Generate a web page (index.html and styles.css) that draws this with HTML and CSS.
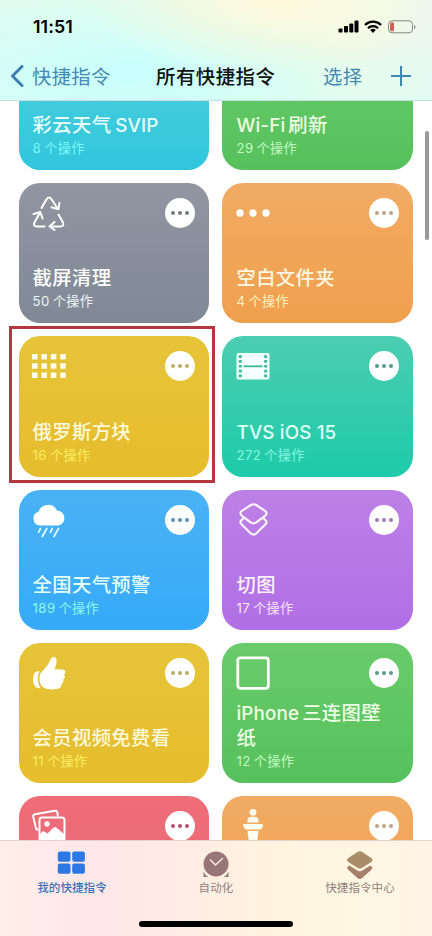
FILE: index.html
```html
<!DOCTYPE html>
<html lang="zh-CN">
<head>
<meta charset="utf-8">
<title>所有快捷指令</title>
<link rel="stylesheet" href="styles.css">
</head>
<body>
<svg class="defs" width="0" height="0">
  <symbol id="more" viewBox="0 0 30 30"><circle cx="15" cy="15" r="15" fill="#fff"/><g fill="currentColor"><circle cx="8" cy="15" r="2"/><circle cx="15" cy="15" r="2"/><circle cx="22" cy="15" r="2"/></g></symbol>
</svg>
<div class="phone">
  <header class="top">
    <div class="status">
      <span class="time">11:51</span>
      <svg class="status-icons" width="78" height="14" viewBox="0 0 78 14">
        <g fill="#000"><rect x="0.5" y="8.5" width="4" height="4" rx="1"/><rect x="6" y="6" width="4" height="6.5" rx="1"/><rect x="11.300" y="3.500" width="4" height="9" rx="1"/><rect x="16.500" y="0.500" width="4" height="12" rx="1"/></g>
        <g fill="none" stroke="#000" stroke-width="2.300"><path d="M27 5a11.300 11.300 0 0 1 16 0"/><path d="M30 8.200a7 7 0 0 1 10 0"/></g><path d="M32.200 10.100a4 4 0 0 1 5.600 0L35 12.900z" fill="#000"/>
        <rect x="50.500" y="0.800" width="24" height="12" rx="3.500" fill="none" stroke="#858a80"/><rect x="52" y="2.300" width="4" height="9" rx="1.500" fill="#d9605a"/><path d="M76 5v4q1.500-.6 1.500-2T76 5z" fill="#858a80"/>
      </svg>
    </div>
    <nav class="nav">
      <svg class="back" width="14" height="22" viewBox="0 0 14 22"><path d="M12 1.500L2.500 11 12 20.500" fill="none" stroke="#3e80b2" stroke-width="3" stroke-linecap="round" stroke-linejoin="round"/></svg>
      <span class="nav-back">快捷指令</span>
      <h1>所有快捷指令</h1>
      <span class="nav-select">选择</span>
      <svg class="plus" width="20" height="20" viewBox="0 0 20 20"><path d="M10 0v20M0 10h20" stroke="#3e88b3" stroke-width="2"/></svg>
    </nav>
  </header>
  <main class="list">
    <div class="grid">
      <section class="card cyan"><h2>彩云天气<b class="after">SVIP</b></h2><p><i>8</i>个操作</p></section>
      <section class="card green"><h2><b class="before">Wi-Fi</b>刷新</h2><p><i>29</i>个操作</p></section>

      <section class="card gray">
        <div class="row"><svg class="icon" viewBox="0 0 36 36"><g fill="none" stroke="#fff" stroke-width="2" stroke-linecap="round" stroke-linejoin="round"><path d="M10.500 13L15.500 4.300Q18 .8 20.500 4.300L27 14"/><path d="M20.500 12.200L27.500 14.200 28.500 7.700"/><path d="M27.500 19.500L32 27.500Q33.500 31.500 29 31.500H19"/><path d="M23.500 27L18.500 31.500 23.500 35"/><path d="M13.500 31.500H6Q1.500 31 3.500 27.500L9 17.500"/><path d="M2.500 19L9.300 17 11.500 23.500"/></g></svg><svg class="more"><use href="#more"/></svg></div>
        <h2>截屏清理</h2><p><i>50</i>个操作</p></section>
      <section class="card orange">
        <div class="row"><svg class="icon" viewBox="0 0 36 36"><g fill="#fff"><circle cx="5" cy="18" r="3.700"/><circle cx="18" cy="18" r="3.700"/><circle cx="31" cy="18" r="3.700"/></g></svg><svg class="more"><use href="#more"/></svg></div>
        <h2>空白文件夹</h2><p><i>4</i>个操作</p></section>

      <section class="card yellow marked">
        <div class="row"><svg class="icon" viewBox="0 0 36 36"><path d="M1 8.700h34M1 18h34M1 27.300h34" stroke="#fffceb" stroke-width="5.600" stroke-dasharray="5.600 3.800"/></svg><svg class="more"><use href="#more"/></svg></div>
        <h2>俄罗斯方块</h2><p><i>16</i>个操作</p></section>
      <section class="card teal">
        <div class="row"><svg class="icon" viewBox="0 0 36 36"><rect x="1.500" y="5" width="33" height="26.500" rx="2" fill="#f2fffc"/><path d="M8.500 18.300h19" stroke="#3bb99b" stroke-width="1.800"/><path d="M5.300 7.300v23.500M30.700 7.300v23.500" stroke="#3bb99b" stroke-width="3" stroke-dasharray="2.700 2.100"/></svg><svg class="more"><use href="#more"/></svg></div>
        <h2><b>TVS iOS 15</b></h2><p><i>272</i>个操作</p></section>

      <section class="card blue">
        <div class="row"><svg class="icon" viewBox="0 0 36 36"><path d="M9 23.500a7 7 0 0 1-1.500-13.700A10 10 0 0 1 26 8.500a7.600 7.600 0 0 1 1.500 15z" fill="#fff"/><path d="M9.500 26.500l-2 3.800M15.800 26.500l-4.500 8M21.300 26.500l-2 3.800M27.500 26.500l-4.500 8" stroke="#e9ffff" stroke-width="1.700" stroke-linecap="round"/></svg><svg class="more"><use href="#more"/></svg></div>
        <h2>全国天气预警</h2><p><i>189</i>个操作</p></section>
      <section class="card purple">
        <div class="row"><svg class="icon" viewBox="0 0 36 36"><g fill="none" stroke="#fff3ff" stroke-width="2.200" stroke-linejoin="round"><path d="M15.800 3Q18.500 1.500 21.200 3L30 8.800q3.200 2.400 0 5l-8.800 6.700q-2.700 1.500-5.400 0L7 13.800q-3.200-2.600 0-5z"/><path d="M9 16l-2 1.700q-3.200 2.600 0 5L15.800 31.500q2.700 2.200 5.400 0L30 22.700q3.200-2.400 0-5L28 16"/></g></svg><svg class="more"><use href="#more"/></svg></div>
        <h2>切图</h2><p><i>17</i>个操作</p></section>

      <section class="card yellow">
        <div class="row"><svg class="icon" viewBox="0 0 36 36"><g fill="#fff"><path d="M8.500 16.500C1 14 .5 29 5 32q2 1.500 4.500 1.200Q4.500 24 8.500 16.500z"/><path d="M20.500 3Q24 .5 25.500 4.500 26 8 23.500 14.200L32 14.500q3 .5 2.300 3 0 1.300-1.300 2 1.700 1.500.5 3.500-.3 1-1.500 1.500 1.300 2-.3 3.500-.5 1-1.500 1.200.7 2.200-1 3.500-1 1-4 1.200Q12.500 36 9.500 29 6.500 19.500 12.500 15 17 10.500 20.500 3z"/></g></svg><svg class="more"><use href="#more"/></svg></div>
        <h2>会员视频免费看</h2><p><i>11</i>个操作</p></section>
      <section class="card green">
        <div class="row"><svg class="icon" viewBox="0 0 36 36"><rect x="2.800" y="2.800" width="30.500" height="30.500" rx="2.500" fill="none" stroke="#fff" stroke-width="2.800"/></svg><svg class="more"><use href="#more"/></svg></div>
        <h2><b class="before">iPhone</b>三连图壁纸</h2><p><i>12</i>个操作</p></section>

      <section class="card red">
        <div class="row"><svg class="icon" viewBox="0 0 36 36"><g fill="none" stroke="#fff" stroke-width="2"><path d="M7.500 22L5.200 21 2.200 8.700Q2 6.500 4 6.200L24 2.800q2-.3 2.300 1.500l.6 4"/><rect x="8.500" y="9.500" width="25" height="24" rx="2.500"/></g><circle cx="16" cy="16" r="2.700" fill="#fff"/><path d="M8.500 28q2.500-6 5-4.500l3 2 5-5q2.500-3 5 0l7 6v7h-25z" fill="#fff"/></svg><svg class="more"><use href="#more"/></svg></div></section>
      <section class="card orange">
        <div class="row"><svg class="icon" viewBox="0 0 36 36"><g fill="#fffdf0"><circle cx="18" cy="4.300" r="3.400"/><path d="M12.500 14.500V12q.5-3.200 4-3.200h3q3.500 0 4 3.200v2.500z"/><path d="M8 16h20q-.5 5.500-3 5.500H11.500Q8.500 21 8 16zM12.500 23h11L22 35h-8z"/></g></svg><svg class="more"><use href="#more"/></svg></div></section>
    </div>
    <div class="scrollbar"></div>
  </main>
  <footer class="tabs">
    <div class="tab on"><svg width="30" height="30" viewBox="0 0 30 30"><g fill="#2e78e6"><rect x="0.800" y="1.500" width="12.700" height="10.300" rx="2"/><rect x="15.200" y="1.500" width="12.700" height="10.300" rx="2"/><rect x="0.800" y="13.400" width="12.700" height="10.300" rx="2"/><rect x="15.200" y="13.400" width="12.700" height="10.300" rx="2"/></g></svg><span>我的快捷指令</span></div>
    <div class="tab mid"><svg width="30" height="30" viewBox="0 0 30 30"><circle cx="15" cy="14" r="12.500" fill="#967775"/><path d="M2.500 27v-5.500q1.500 4 5 5.500zM27.500 27v-5.500q-1.500 4-5 5.500z" fill="#8a8178"/><path d="M9 9.500l5.500 5.500L22 8" fill="none" stroke="#ffe9e5" stroke-width="1.500"/></svg><span>自动化</span></div>
    <div class="tab end"><svg width="30" height="30" viewBox="0 0 30 30"><path d="M12.800 1.800q2-1.200 4 0l9.500 6.200q2.500 2 0 4l-9.500 6q-2 1.200-4 0l-9.500-6q-2.500-2 0-4z" fill="#a98d69"/><path d="M4.300 15.500l8.500 5.300q2 1 4 0l8.500-5.300q3.500 2 .8 4.500l-9.300 8.300q-2 1.500-4 0L3.500 20q-3-2.500.8-4.500z" fill="#a5806d"/></svg><span>快捷指令中心</span></div>
    <div class="home"></div>
  </footer>
</div>
</body>
</html>
```

FILE: styles.css
```css
* { box-sizing: border-box; }
body { margin: 0; font-family: Inter, "Noto Sans CJK SC", sans-serif; }
.defs { position: absolute; }
.phone { width: 432px; height: 936px; display: flex; flex-direction: column; overflow: hidden; background: #fff; }
.top {
  height: 101px; flex: none; border-bottom: 1px solid #c2e2df;
  background:
    radial-gradient(ellipse 190px 75px at 275px 0, #fff9dc, #fff9dc00),
    radial-gradient(ellipse 230px 85px at 130px 72px, #c8fffd, #c8fffd00),
    linear-gradient(#eafae000 40%, #d8fff680),
    linear-gradient(90deg, #e0fbf0, #e4fbe9 50%, #ecfbe8 80%, #ebf8f1);
}
.status { height: 51px; display: flex; align-items: center; justify-content: space-between; padding: 2px 16px 0 33px; }
.time { font-size: 17.800px; font-weight: 600; letter-spacing: .1px; }
.nav { height: 50px; display: flex; align-items: center; padding-left: 10px; color: #4588b0; font-size: 19.300px; letter-spacing: .4px; white-space: nowrap; }
.nav-back { width: 79px; margin-left: 8px; }
.nav h1 { width: 120px; margin: -2px 0 0 45px; color: #111; font-size: 19.400px; letter-spacing: .5px; font-weight: 500; }
.nav-select { width: 40px; margin-left: 47px; }
.plus { margin-left: 28px; }
.list { height: 739px; flex: none; overflow: hidden; position: relative; }
.grid { margin: -71.400px 18px 0 18.600px; display: grid; grid-template-columns: 190.900px 190.900px; grid-auto-rows: 140.500px; gap: 12.850px 13px; }
.card { border-radius: 21px; padding: 12px 14px 11.300px 14px; display: flex; flex-direction: column; justify-content: flex-end; color: #fff; position: relative; }
.row { display: flex; justify-content: space-between; align-items: center; margin: 0 .7px auto -1.600px; }
.icon { width: 36px; height: 36px; }
.more { width: 30px; height: 30px; }
.card h2 { margin: 0; font-size: 19.300px; line-height: 25px; font-weight: 500; letter-spacing: .4px; color: var(--title, #fff); }
.card b { font-weight: 500; font-size: 18.800px; letter-spacing: .15px; }
.before { margin-right: 3px; }
.after { margin-left: 4px; }
.card p { margin: 0; font-size: 13.200px; line-height: 21px; letter-spacing: .3px; color: var(--sub); }
.card i { font-style: normal; margin-right: 3px; letter-spacing: .4px; }
.cyan { background: linear-gradient(#55d0dc, #2fc6dd); --title: #e6fffa; --sub: #7cf8f5; }
.green { background: linear-gradient(#69cb69, #56c15c); --title: #efffe6; --sub: #c5f7c4; }
.gray { background: linear-gradient(#9295a2, #7f8995); --sub: #eef4f8; }
.orange { background: linear-gradient(#f1ab63, #efa04e); --title: #fff7e4; --sub: #fff0be; }
.yellow { background: linear-gradient(#e6c438, #e5bd2d); --title: #fff9dc; --sub: #fcec60; }
.teal { background: linear-gradient(#4ccdb0, #1dcbaa); --title: #e0fff5; --sub: #8af5df; }
.blue { background: linear-gradient(#49b2f4, #36aaf8); --title: #e4fff9; --sub: #8bf7ef; }
.purple { background: linear-gradient(#bd80e6, #b06fe5); --title: #fff0ff; --sub: #f8e4ff; }
.red { background: linear-gradient(#ee6d79, #e86876); }
.orange .more { color: #bea280; }
.yellow .more { color: #bdac66; }
.gray .more { color: #777b83; }
.teal .more, .green .more { color: #559a88; }
.blue .more { color: #5c91ae; }
.purple .more { color: #9d78af; }
.red .more { color: #b84f70; }
.marked::after { content: ""; position: absolute; inset: -10.500px -5.500px -6px -9.600px; border: 3px solid #b5363e; }
.scrollbar { position: absolute; right: 3px; top: 30px; width: 4px; height: 109px; border-radius: 2px; background: #999; }
.tabs {
  height: 96px; flex: none; position: relative; border-top: 1px solid #e4d3cd;
  display: grid; grid-template-columns: repeat(3, 1fr);
  background: linear-gradient(90deg, #ffeeea, #ffe7e7 22%, #ffece4 45%, #fff5df 65%, #fff6e3 88%, #fff2e6);
}
.tab { display: flex; flex-direction: column; align-items: center; padding-top: 9px; font-size: 11.500px; line-height: 16px; letter-spacing: .1px; color: #8f817c; }
.tab svg { flex: none; }
.tab.on { color: #3c73b8; font-weight: 500; }
.home { position: absolute; left: 139px; bottom: 9px; width: 154px; height: 6px; border-radius: 3px; background: #000; }
```
